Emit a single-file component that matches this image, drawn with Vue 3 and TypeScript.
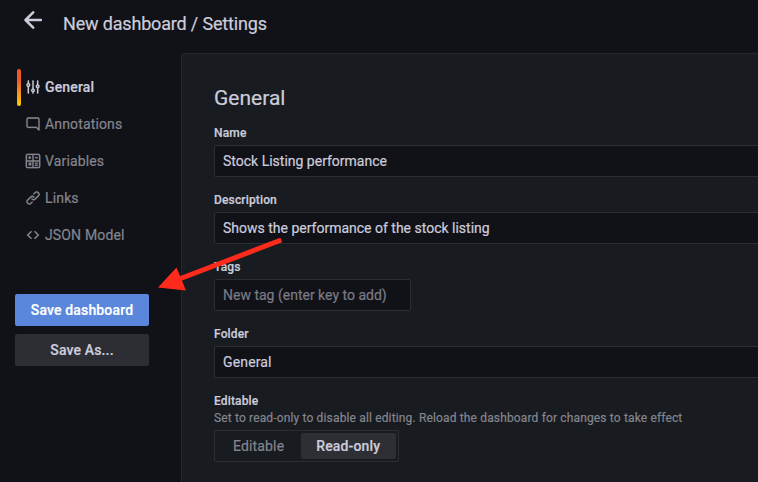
<script setup lang="ts">
import { ref } from 'vue'

interface NavItem {
  label: string
  icon: string
}

const navItems: NavItem[] = [
  {
    label: 'General',
    icon: 'M20,8.18V3a1,1,0,0,0-2,0V8.18a3,3,0,0,0,0,5.64V21a1,1,0,0,0,2,0V13.82a3,3,0,0,0,0-5.64ZM19,12a1,1,0,1,1,1-1A1,1,0,0,1,19,12Zm-6,2.18V3a1,1,0,0,0-2,0V14.18a3,3,0,0,0,0,5.64V21a1,1,0,0,0,2,0V19.82a3,3,0,0,0,0-5.64ZM12,18a1,1,0,1,1,1-1A1,1,0,0,1,12,18ZM6,6.18V3A1,1,0,0,0,4,3V6.18a3,3,0,0,0,0,5.64V21a1,1,0,0,0,2,0V11.82A3,3,0,0,0,6,6.18ZM5,10A1,1,0,1,1,6,9,1,1,0,0,1,5,10Z',
  },
  {
    label: 'Annotations',
    icon: 'M19,2H5A3,3,0,0,0,2,5V15a3,3,0,0,0,3,3H16.59l3.7,3.71A1,1,0,0,0,21,22a.84.84,0,0,0,.38-.08A1,1,0,0,0,22,21V5A3,3,0,0,0,19,2Zm1,16.59-2.29-2.3A1,1,0,0,0,17,16H5a1,1,0,0,1-1-1V5A1,1,0,0,1,5,4H19a1,1,0,0,1,1,1Z',
  },
  {
    label: 'Variables',
    icon: 'M4,1H20a3,3,0,0,1,3,3V20a3,3,0,0,1-3,3H4a3,3,0,0,1-3-3V4A3,3,0,0,1,4,1ZM4,3A1,1,0,0,0,3,4V11H11V3ZM13,3V11H21V4a1,1,0,0,0-1-1ZM3,13V20a1,1,0,0,0,1,1H11V13ZM13,13V21H20a1,1,0,0,0,1-1V13ZM6,5H8V6H9V8H8V9H6V8H5V6H6ZM15,6H19V8H15ZM15,14.5H19V16.5H15ZM15,17.5H19V19.5H15ZM5,15.4L6.4,14L7.5,15.1L8.6,14L10,15.4L8.9,16.5L10,17.6L8.6,19L7.5,17.9L6.4,19L5,17.6L6.1,16.5Z',
  },
  {
    label: 'Links',
    icon: 'M10,17.55,8.23,19.27a2.47,2.47,0,0,1-3.5-3.5l4.54-4.55a2.46,2.46,0,0,1,3.39-.09l.12.1a1,1,0,0,0,1.4-1.43A2.75,2.75,0,0,0,14,9.59a4.46,4.46,0,0,0-6.09.22L3.31,14.36a4.48,4.48,0,0,0,6.33,6.33L11.37,19A1,1,0,0,0,10,17.55ZM20.69,3.31a4.49,4.49,0,0,0-6.33,0L12.63,5A1,1,0,0,0,14,6.45l1.73-1.72a2.47,2.47,0,0,1,3.5,3.5l-4.54,4.55a2.46,2.46,0,0,1-3.39.09l-.12-.1a1,1,0,0,0-1.4,1.43,2.75,2.75,0,0,0,.23.21,4.47,4.47,0,0,0,6.09-.22l4.55-4.55A4.49,4.49,0,0,0,20.69,3.31Z',
  },
  {
    label: 'JSON Model',
    icon: 'M9.71,6.29a1,1,0,0,0-1.42,0l-5,5a1,1,0,0,0,0,1.42l5,5a1,1,0,0,0,1.42-1.42L5.41,12l4.3-4.29A1,1,0,0,0,9.71,6.29ZM14.29,6.29a1,1,0,0,1,1.42,0l5,5a1,1,0,0,1,0,1.42l-5,5a1,1,0,0,1-1.42-1.42L18.59,12l-4.3-4.29A1,1,0,0,1,14.29,6.29Z',
  },
]

const activeItem = ref('General')
const name = ref('Stock Listing performance')
const description = ref('Shows the performance of the stock listing')
const newTag = ref('')
const folder = ref('General')
const modes = ['Editable', 'Read-only']
const mode = ref('Read-only')
</script>

<template>
  <div class="page">
    <header class="toolbar">
      <button class="back" aria-label="Back">
        <svg viewBox="0 0 18 18" width="18" height="18">
          <path d="M9.2 1.4 1.5 9l7.7 7.6M1.8 9H17" />
        </svg>
      </button>
      <h1>New dashboard / Settings</h1>
    </header>

    <div class="body">
      <aside class="sidebar">
        <nav>
          <a
            v-for="item in navItems"
            :key="item.label"
            class="nav-item"
            :class="{ active: item.label === activeItem }"
            @click="activeItem = item.label"
          >
            <svg viewBox="0 0 24 24" width="16" height="16"><path fill-rule="evenodd" :d="item.icon" /></svg>
            <span>{{ item.label }}</span>
          </a>
        </nav>
        <div class="actions">
          <button class="btn primary">Save dashboard</button>
          <button class="btn secondary">Save As...</button>
        </div>
      </aside>

      <main class="panel">
        <h2>General</h2>
        <div class="field">
          <label for="name">Name</label>
          <input id="name" v-model="name" class="control" />
        </div>
        <div class="field">
          <label for="description">Description</label>
          <input id="description" v-model="description" class="control" />
        </div>
        <div class="field">
          <label for="tags">Tags</label>
          <input id="tags" v-model="newTag" class="control tags" placeholder="New tag (enter key to add)" />
        </div>
        <div class="field">
          <label>Folder</label>
          <div class="control folder">{{ folder }}</div>
        </div>
        <div class="field">
          <label>Editable</label>
          <p class="hint">Set to read-only to disable all editing. Reload the dashboard for changes to take effect</p>
          <div class="radio-group">
            <button
              v-for="option in modes"
              :key="option"
              class="radio"
              :class="{ selected: option === mode }"
              @click="mode = option"
            >{{ option }}</button>
          </div>
        </div>
      </main>
    </div>

    <svg class="arrow" viewBox="0 0 126 56" width="126" height="56">
      <path d="M123.300 2 20 41.500" />
      <polygon points="0,49.500 18.500,29.500 28,52.500" />
    </svg>
  </div>
</template>

<style>
body {
  background: #111217;
  overflow: hidden;
}
</style>

<style scoped>
.page {
  position: relative;
  box-sizing: border-box;
  width: 758px;
  height: 482px;
  overflow: hidden;
  display: flex;
  flex-direction: column;
  background: #111217;
  color: #ccccdc;
  font-family: Roboto, "Liberation Sans", sans-serif;
  font-size: 14px;
  line-height: 22px;
  letter-spacing: 0.15px;
  -webkit-text-stroke: 0.2px;
}
.page * {
  box-sizing: border-box;
}
button, input {
  font: inherit;
  letter-spacing: inherit;
  color: inherit;
  border: 0;
  margin: 0;
  outline: none;
}
.toolbar {
  flex: none;
  display: flex;
  align-items: flex-start;
  height: 53px;
  padding: 11px 0 0 24px;
}
.back {
  display: flex;
  padding: 0;
  background: none;
}
.back svg {
  fill: none;
  stroke: #ccccdc;
  stroke-width: 2.5;
  stroke-linecap: round;
  stroke-linejoin: round;
}
h1 {
  margin: 1px 0 0 21px;
  font-size: 18px;
  font-weight: 400;
  line-height: 24px;
  letter-spacing: -0.17px;
}
.body {
  flex: 1;
  min-height: 0;
  display: flex;
}
.sidebar {
  flex: none;
  width: 181px;
  padding: 16px 32px 0 15px;
}
nav {
  display: flex;
  flex-direction: column;
  padding-left: 2px;
}
.nav-item {
  display: grid;
  grid-template-columns: 4px 16px auto;
  justify-content: start;
  align-items: center;
  column-gap: 4px;
  height: 37px;
  color: #85858f;
  cursor: pointer;
}
.nav-item::before {
  content: "";
  height: 37px;
  border-radius: 2px;
}
.nav-item svg {
  margin-bottom: 2px;
  fill: currentColor;
  stroke: currentColor;
  stroke-width: 0.3;
}
.nav-item span {
  margin-bottom: 2px;
}
.nav-item.active {
  color: #ccccdc;
  font-weight: 500;
}
.nav-item.active::before {
  background: linear-gradient(#f05a28 30%, #fbca0a 99%);
}
.actions {
  display: flex;
  flex-direction: column;
  gap: 8px;
  margin-top: 40px;
}
.btn {
  height: 32px;
  padding: 0;
  border-radius: 2px;
  font-weight: 500;
}
.primary {
  background: #5a87dc;
  color: #fff;
}
.secondary {
  background: #2d2e33;
}
.panel {
  flex: 1;
  min-width: 0;
  padding: 32px 0 0 32px;
  border: 1px solid #24272c;
  border-width: 1px 0 0 1px;
  border-radius: 2px 0 0 0;
  background: #181b1f;
}
h2 {
  margin: 0 0 16px;
  font-size: 21px;
  font-weight: 400;
  line-height: 24px;
  letter-spacing: 0;
}
.field {
  margin-bottom: 16px;
}
label {
  display: block;
  margin-bottom: 4px;
  font-size: 12px;
  font-weight: 500;
  line-height: 15px;
}
.control {
  display: block;
  width: 100%;
  height: 32px;
  padding: 0 8px;
  border: 1px solid #2c2e33;
  border-right: 0;
  border-radius: 2px 0 0 2px;
  background: #111217;
  line-height: 30px;
  letter-spacing: 0;
}
.folder {
  letter-spacing: 0.15px;
}
.tags {
  width: 197px;
  border-right: 1px solid #2c2e33;
  border-radius: 2px;
}
.tags::placeholder {
  color: #7b7b86;
  opacity: 1;
}
.hint {
  margin: -3px 0 4px;
  color: #85858f;
  font-size: 12px;
  line-height: 16px;
}
.radio-group {
  display: flex;
  gap: 1px;
  width: fit-content;
  height: 32px;
  padding: 2px;
  border: 1px solid #2c2e33;
  border-radius: 2px;
}
.radio {
  height: 26px;
  padding: 0 16px;
  border-radius: 2px;
  background: none;
  color: #85858f;
}
.radio.selected {
  padding-left: 15px;
  background: #2d2f34;
  color: #ccccdc;
  font-weight: 500;
}
.arrow {
  position: absolute;
  left: 158px;
  top: 238px;
}
.arrow path {
  stroke: #fe2a1c;
  stroke-width: 5;
}
.arrow polygon {
  fill: #fe2a1c;
}
</style>
